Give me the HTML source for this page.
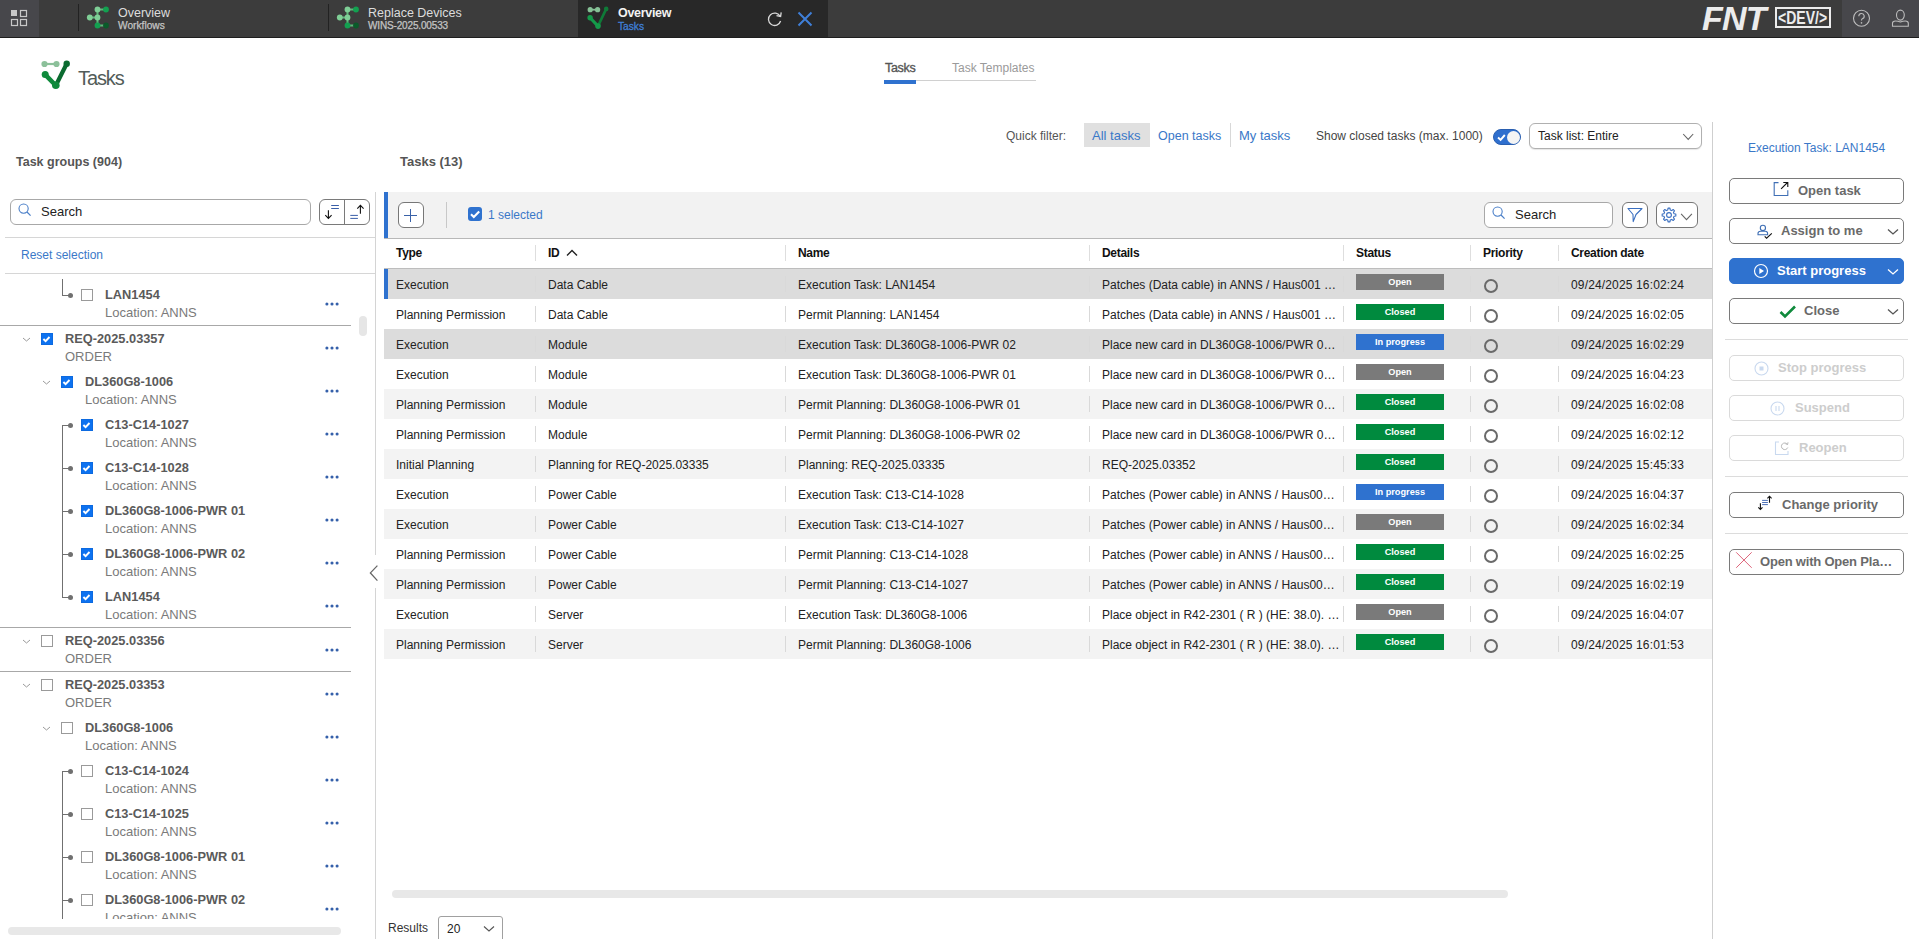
<!DOCTYPE html>
<html><head><meta charset="utf-8">
<style>
*{box-sizing:border-box;margin:0;padding:0}
html,body{width:1919px;height:939px;overflow:hidden;background:#fff;font-family:"Liberation Sans",sans-serif;color:#222}
.a{position:absolute}
.t{position:absolute;white-space:nowrap;line-height:1}
svg{position:absolute;overflow:visible}
.btn{position:absolute;left:1729px;width:175px;height:26px;border:1px solid #7a7a7a;border-radius:5px;background:#fff}
.btn .l{position:absolute;top:0;line-height:24px;font-size:13px;font-weight:bold;color:#6a6a6a;white-space:nowrap}
.btn.dis{border-color:#dadada}
.btn.dis .l{color:#cdcdcd}
.row{position:absolute;left:384px;width:1328px;height:30px;font-size:12px;line-height:30px;color:#222}
.row .c{position:absolute;top:0.8px;white-space:nowrap}
.row .sep{position:absolute;top:7px;width:1px;height:16px;background:#d9d9d9}
.badge{position:absolute;top:5px;left:972px;width:88px;height:16px;color:#fff;font-size:9.2px;font-weight:bold;line-height:16px;text-align:center}
.prio{position:absolute;left:1100px;top:10px;width:14px;height:14px;border:2px solid #6a6a6a;border-radius:50%}
.ti{position:absolute;left:0;width:351px;height:43px}
.ti .nm{position:absolute;top:6.5px;font-size:12.8px;font-weight:bold;color:#5a5a5a;white-space:nowrap;line-height:1}
.ti .sub{position:absolute;top:23.7px;font-size:13px;color:#7a7a7a;white-space:nowrap;line-height:1}
.cb{position:absolute;top:7px;width:12px;height:12px;border:1px solid #9a9a9a;background:#fff}
.cb.on{background:#0d72f0;border-color:#0d6ae0}
.dots{position:absolute;left:324px;top:20px;width:16px;height:4px}
</style></head><body>

<div class="a" style="left:0;top:0;width:1919px;height:37px;background:#3c3c3c"></div>
<div class="a" style="left:0;top:37px;width:1919px;height:1px;background:#1e1e1e"></div>
<div class="a" style="left:0;top:0;width:39px;height:37px;background:#47474b"></div>
<svg style="left:0;top:0" width="39" height="37">
<rect x="11" y="10" width="6" height="6" fill="#c8c8c8"/>
<rect x="20.5" y="10.5" width="6" height="6" fill="none" stroke="#c8c8c8" stroke-width="1.2"/>
<rect x="11.5" y="19.5" width="6" height="6" fill="none" stroke="#c8c8c8" stroke-width="1.2"/>
<rect x="20.5" y="19.5" width="6" height="6" fill="none" stroke="#c8c8c8" stroke-width="1.2"/>
</svg>
<div class="a" style="left:78px;top:4px;width:1px;height:27px;background:#222"></div>
<div class="a" style="left:328px;top:4px;width:1px;height:27px;background:#222"></div>
<svg style="left:87px;top:0" width="24" height="37">
<path d="M10.5 9.5 L10.5 25.5 M2.5 17.5 L10.5 17.5 M10.5 9.5 L19 9.5 M10.5 25.5 L19 25.5" stroke="#5fb57a" stroke-width="2" fill="none"/>
<circle cx="10.5" cy="9.5" r="2.9" fill="#7fcf96"/>
<circle cx="2.8" cy="17.5" r="2.9" fill="#7fcf96"/>
<circle cx="10.5" cy="17.5" r="2.9" fill="#7fcf96"/>
<circle cx="19" cy="9.5" r="2.9" fill="#12a050"/>
<circle cx="10.5" cy="25.5" r="2.9" fill="#12a050"/>
<circle cx="19" cy="25.5" r="2.9" fill="#0a5a2a"/>
</svg>
<div class="t" style="left:118px;top:7px;font-size:12.5px;color:#dcdcdc">Overview</div>
<div class="t" style="left:118px;top:21px;font-size:10.2px;color:#c4c4c4;-webkit-text-stroke:0.25px #c4c4c4">Workflows</div>
<svg style="left:337px;top:0" width="24" height="37">
<path d="M10.5 9.5 L10.5 25.5 M2.5 17.5 L10.5 17.5 M10.5 9.5 L19 9.5 M10.5 25.5 L19 25.5" stroke="#5fb57a" stroke-width="2" fill="none"/>
<circle cx="10.5" cy="9.5" r="2.9" fill="#7fcf96"/>
<circle cx="2.8" cy="17.5" r="2.9" fill="#7fcf96"/>
<circle cx="10.5" cy="17.5" r="2.9" fill="#7fcf96"/>
<circle cx="19" cy="9.5" r="2.9" fill="#12a050"/>
<circle cx="10.5" cy="25.5" r="2.9" fill="#12a050"/>
<circle cx="19" cy="25.5" r="2.9" fill="#0a5a2a"/>
</svg>
<div class="t" style="left:368px;top:7px;font-size:12.5px;color:#dcdcdc">Replace Devices</div>
<div class="t" style="left:368px;top:21px;font-size:10px;color:#c4c4c4;letter-spacing:-0.15px;-webkit-text-stroke:0.25px #c4c4c4">WINS-2025.00533</div>
<div class="a" style="left:578px;top:0;width:250px;height:37px;background:#282828"></div>
<svg style="left:584px;top:4px" width="26" height="28">
<path d="M6.2 5.7 L13.6 5.7" stroke="#86c196" stroke-width="1.8"/>
<circle cx="6.2" cy="5.7" r="2.6" fill="#86c196"/><circle cx="13.6" cy="5.7" r="2.6" fill="#86c196"/>
<path d="M6.1 13.7 L14 22.1" stroke="#159a4a" stroke-width="3.1" stroke-linecap="round"/>
<path d="M14 22.1 L22.2 4.9" stroke="#0f7a38" stroke-width="2.6" stroke-linecap="round"/>
<circle cx="6.1" cy="13.7" r="2.7" fill="#159a4a"/>
<circle cx="14" cy="22.1" r="2.8" fill="#159a4a"/>
<circle cx="22.2" cy="4.9" r="2.3" fill="#0f7a38"/>
</svg>
<div class="t" style="left:618px;top:7px;font-size:12.5px;font-weight:bold;color:#f2f2f2;letter-spacing:-0.3px">Overview</div>
<div class="t" style="left:618px;top:21.5px;font-size:10.2px;color:#3f7fd8;-webkit-text-stroke:0.3px #3f7fd8">Tasks</div>
<svg style="left:766px;top:10px" width="18" height="18">
<path d="M14.2 6.5 A6.2 6.2 0 1 0 14.6 11" stroke="#d8d8d8" stroke-width="1.3" fill="none"/>
<path d="M10.5 5.6 L14.6 6.4 L15.2 2.4" stroke="#d8d8d8" stroke-width="1.3" fill="none"/>
</svg>
<svg style="left:797px;top:11px" width="16" height="16">
<path d="M1.5 1.5 L14.5 14.5 M14.5 1.5 L1.5 14.5" stroke="#3f7fd8" stroke-width="2"/>
</svg>
<div class="t" style="left:1702px;top:1px;font-size:34px;font-weight:bold;font-style:italic;color:#ececec;letter-spacing:-0.8px;transform:scaleX(1.0);transform-origin:left">FNT</div>
<div class="a" style="left:1775px;top:7px;width:56px;height:21px;border:2.2px solid #ececec"></div>
<div class="t" style="left:1778px;top:9px;font-size:18px;font-weight:bold;color:#ececec;transform:scaleX(0.78);transform-origin:left;letter-spacing:0px">&lt;DEV/&gt;</div>
<div class="a" style="left:1842px;top:0;width:77px;height:37px;background:#47474b"></div>
<svg style="left:1852px;top:9px" width="20" height="20">
<circle cx="9.5" cy="9.3" r="8" stroke="#bdbdbd" stroke-width="1.1" fill="none"/>
<path d="M6.8 7.3 A2.7 2.7 0 1 1 10.3 9.8 Q9.5 10.3 9.5 11.6" stroke="#bdbdbd" stroke-width="1.1" fill="none"/>
<circle cx="9.5" cy="13.9" r="0.8" fill="#bdbdbd"/>
</svg>
<svg style="left:1891px;top:9px" width="20" height="20">
<ellipse cx="9.4" cy="6.1" rx="3.9" ry="5" stroke="#bdbdbd" stroke-width="1.1" fill="none"/>
<path d="M1.5 17.3 L1.5 14.2 Q1.5 12 4.5 12 Q7 12 9.4 13 Q11.8 12 14.3 12 Q17.3 12 17.3 14.2 L17.3 17.3 Z" stroke="#bdbdbd" stroke-width="1.1" fill="none"/>
</svg>
<svg style="left:40px;top:58px" width="32" height="32">
<path d="M4.5 6 L16.5 6" stroke="#8cc09a" stroke-width="2.2"/>
<circle cx="4.5" cy="6" r="3.1" fill="#8cc09a"/><circle cx="16.5" cy="6" r="3.1" fill="#8cc09a"/>
<path d="M5.2 16.6 L15.8 27.5" stroke="#0f8a3c" stroke-width="4.6" stroke-linecap="round"/>
<path d="M15.8 27.5 L26.7 5.8" stroke="#0b6b30" stroke-width="4.2" stroke-linecap="round"/>
<circle cx="5.2" cy="16.6" r="3.5" fill="#0f8a3c"/>
<circle cx="15.8" cy="27.3" r="3.8" fill="#0f8a3c"/>
<circle cx="26.7" cy="5.8" r="3.2" fill="#0b6b30"/>
</svg>
<div class="t" style="left:78px;top:68.4px;font-size:20px;color:#525c59;letter-spacing:-1.1px">Tasks</div>
<div class="t" style="left:885px;top:62px;font-size:12.5px;color:#555;letter-spacing:-0.3px;-webkit-text-stroke:0.35px #555">Tasks</div>
<div class="t" style="left:952px;top:62px;font-size:12px;color:#9a9a9a">Task Templates</div>
<div class="a" style="left:884px;top:80px;width:152px;height:1px;background:#d0d0d0"></div>
<div class="a" style="left:884px;top:80px;width:32px;height:3.5px;background:#2f72cf"></div>
<div class="t" style="left:16px;top:156px;font-size:12.5px;font-weight:bold;color:#555">Task groups (904)</div>
<div class="a" style="left:10px;top:199px;width:301px;height:26px;border:1px solid #a8a8a8;border-radius:6px;background:#fff"></div>
<svg style="left:18px;top:203px" width="14" height="14">
<circle cx="5.6" cy="5.6" r="4.6" stroke="#4a7fc8" stroke-width="1.1" fill="none"/>
<path d="M9 9 L12.6 12.6" stroke="#4a7fc8" stroke-width="1.2"/>
</svg>
<div class="t" style="left:41px;top:205px;font-size:13px;color:#222">Search</div>
<div class="a" style="left:319px;top:199px;width:51px;height:26px;border:1px solid #7a7a7a;border-radius:6px;background:#fff"></div>
<div class="a" style="left:344px;top:199px;width:1px;height:26px;background:#7a7a7a"></div>
<svg style="left:324px;top:203px" width="18" height="18">
<path d="M4.4 7.3 L4.4 15.3 M1.3 12.2 L4.4 15.4 L7.6 12.2" stroke="#111" stroke-width="1.1" fill="none"/>
<path d="M7.2 2.5 L14.9 2.5 M7.2 5.5 L14.9 5.5" stroke="#3a5fa8" stroke-width="1"/>
</svg>
<svg style="left:348px;top:203px" width="18" height="18">
<path d="M12.4 10.8 L12.4 2.5 M9.3 5.6 L12.4 2.4 L15.6 5.6" stroke="#111" stroke-width="1.1" fill="none"/>
<path d="M2.3 12.4 L9.9 12.4 M2.3 15.4 L9.9 15.4" stroke="#3a5fa8" stroke-width="1"/>
</svg>
<div class="a" style="left:5px;top:237px;width:370px;height:1px;background:#d6d6d6"></div>
<div class="t" style="left:21px;top:249px;font-size:12px;color:#3a78c8">Reset selection</div>
<div class="a" style="left:5px;top:273px;width:370px;height:1px;background:#d6d6d6"></div>
<div class="a" style="left:0;top:274px;width:375px;height:645px;overflow:hidden">
<div class="ti" style="top:8px">
<div class="a" style="left:62px;top:-3px;width:1px;height:17px;background:#707070"></div>
<div class="a" style="left:62px;top:13px;width:7px;height:1px;background:#707070"></div>
<div class="a" style="left:67.5px;top:11px;width:5px;height:5px;border-radius:50%;background:#707070"></div>
<div class="cb" style="left:81px"></div>
<div class="nm" style="left:105px">LAN1454</div>
<div class="sub" style="left:105px">Location: ANNS</div>
<svg class="dots" style="left:324px;top:20px" width="16" height="4"><circle cx="2.9" cy="2" r="1.55" fill="#3560aa"/><circle cx="8" cy="2" r="1.55" fill="#3560aa"/><circle cx="13.1" cy="2" r="1.55" fill="#3560aa"/></svg>
</div>
<div class="a" style="left:0;top:51px;width:351px;height:1px;background:#a8a8a8"></div>
<div class="ti" style="top:52px">
<svg style="left:22px;top:11px" width="10" height="6"><path d="M1 1 L4.5 4 L8 1" stroke="#9a9a9a" stroke-width="1" fill="none"/></svg>
<div class="cb on" style="left:41px"><svg style="left:1px;top:1.5px" width="10" height="8"><path d="M0.4 3 L2.6 5.2 L6.5 1.0" stroke="#fff" stroke-width="1.9" fill="none"/></svg></div>
<div class="nm" style="left:65px">REQ-2025.03357</div>
<div class="sub" style="left:65px">ORDER</div>
<svg class="dots" style="left:324px;top:20px" width="16" height="4"><circle cx="2.9" cy="2" r="1.55" fill="#3560aa"/><circle cx="8" cy="2" r="1.55" fill="#3560aa"/><circle cx="13.1" cy="2" r="1.55" fill="#3560aa"/></svg>
</div>
<div class="ti" style="top:95px">
<svg style="left:42px;top:11px" width="10" height="6"><path d="M1 1 L4.5 4 L8 1" stroke="#9a9a9a" stroke-width="1" fill="none"/></svg>
<div class="cb on" style="left:61px"><svg style="left:1px;top:1.5px" width="10" height="8"><path d="M0.4 3 L2.6 5.2 L6.5 1.0" stroke="#fff" stroke-width="1.9" fill="none"/></svg></div>
<div class="nm" style="left:85px">DL360G8-1006</div>
<div class="sub" style="left:85px">Location: ANNS</div>
<svg class="dots" style="left:324px;top:20px" width="16" height="4"><circle cx="2.9" cy="2" r="1.55" fill="#3560aa"/><circle cx="8" cy="2" r="1.55" fill="#3560aa"/><circle cx="13.1" cy="2" r="1.55" fill="#3560aa"/></svg>
</div>
<div class="ti" style="top:138px">
<div class="a" style="left:62px;top:13px;width:1px;height:30px;background:#707070"></div>
<div class="a" style="left:62px;top:13px;width:7px;height:1px;background:#707070"></div>
<div class="a" style="left:67.5px;top:11px;width:5px;height:5px;border-radius:50%;background:#707070"></div>
<div class="cb on" style="left:81px"><svg style="left:1px;top:1.5px" width="10" height="8"><path d="M0.4 3 L2.6 5.2 L6.5 1.0" stroke="#fff" stroke-width="1.9" fill="none"/></svg></div>
<div class="nm" style="left:105px">C13-C14-1027</div>
<div class="sub" style="left:105px">Location: ANNS</div>
<svg class="dots" style="left:324px;top:20px" width="16" height="4"><circle cx="2.9" cy="2" r="1.55" fill="#3560aa"/><circle cx="8" cy="2" r="1.55" fill="#3560aa"/><circle cx="13.1" cy="2" r="1.55" fill="#3560aa"/></svg>
</div>
<div class="ti" style="top:181px">
<div class="a" style="left:62px;top:0;width:1px;height:43px;background:#707070"></div>
<div class="a" style="left:62px;top:13px;width:7px;height:1px;background:#707070"></div>
<div class="a" style="left:67.5px;top:11px;width:5px;height:5px;border-radius:50%;background:#707070"></div>
<div class="cb on" style="left:81px"><svg style="left:1px;top:1.5px" width="10" height="8"><path d="M0.4 3 L2.6 5.2 L6.5 1.0" stroke="#fff" stroke-width="1.9" fill="none"/></svg></div>
<div class="nm" style="left:105px">C13-C14-1028</div>
<div class="sub" style="left:105px">Location: ANNS</div>
<svg class="dots" style="left:324px;top:20px" width="16" height="4"><circle cx="2.9" cy="2" r="1.55" fill="#3560aa"/><circle cx="8" cy="2" r="1.55" fill="#3560aa"/><circle cx="13.1" cy="2" r="1.55" fill="#3560aa"/></svg>
</div>
<div class="ti" style="top:224px">
<div class="a" style="left:62px;top:0;width:1px;height:43px;background:#707070"></div>
<div class="a" style="left:62px;top:13px;width:7px;height:1px;background:#707070"></div>
<div class="a" style="left:67.5px;top:11px;width:5px;height:5px;border-radius:50%;background:#707070"></div>
<div class="cb on" style="left:81px"><svg style="left:1px;top:1.5px" width="10" height="8"><path d="M0.4 3 L2.6 5.2 L6.5 1.0" stroke="#fff" stroke-width="1.9" fill="none"/></svg></div>
<div class="nm" style="left:105px">DL360G8-1006-PWR 01</div>
<div class="sub" style="left:105px">Location: ANNS</div>
<svg class="dots" style="left:324px;top:20px" width="16" height="4"><circle cx="2.9" cy="2" r="1.55" fill="#3560aa"/><circle cx="8" cy="2" r="1.55" fill="#3560aa"/><circle cx="13.1" cy="2" r="1.55" fill="#3560aa"/></svg>
</div>
<div class="ti" style="top:267px">
<div class="a" style="left:62px;top:0;width:1px;height:43px;background:#707070"></div>
<div class="a" style="left:62px;top:13px;width:7px;height:1px;background:#707070"></div>
<div class="a" style="left:67.5px;top:11px;width:5px;height:5px;border-radius:50%;background:#707070"></div>
<div class="cb on" style="left:81px"><svg style="left:1px;top:1.5px" width="10" height="8"><path d="M0.4 3 L2.6 5.2 L6.5 1.0" stroke="#fff" stroke-width="1.9" fill="none"/></svg></div>
<div class="nm" style="left:105px">DL360G8-1006-PWR 02</div>
<div class="sub" style="left:105px">Location: ANNS</div>
<svg class="dots" style="left:324px;top:20px" width="16" height="4"><circle cx="2.9" cy="2" r="1.55" fill="#3560aa"/><circle cx="8" cy="2" r="1.55" fill="#3560aa"/><circle cx="13.1" cy="2" r="1.55" fill="#3560aa"/></svg>
</div>
<div class="ti" style="top:310px">
<div class="a" style="left:62px;top:-3px;width:1px;height:17px;background:#707070"></div>
<div class="a" style="left:62px;top:13px;width:7px;height:1px;background:#707070"></div>
<div class="a" style="left:67.5px;top:11px;width:5px;height:5px;border-radius:50%;background:#707070"></div>
<div class="cb on" style="left:81px"><svg style="left:1px;top:1.5px" width="10" height="8"><path d="M0.4 3 L2.6 5.2 L6.5 1.0" stroke="#fff" stroke-width="1.9" fill="none"/></svg></div>
<div class="nm" style="left:105px">LAN1454</div>
<div class="sub" style="left:105px">Location: ANNS</div>
<svg class="dots" style="left:324px;top:20px" width="16" height="4"><circle cx="2.9" cy="2" r="1.55" fill="#3560aa"/><circle cx="8" cy="2" r="1.55" fill="#3560aa"/><circle cx="13.1" cy="2" r="1.55" fill="#3560aa"/></svg>
</div>
<div class="a" style="left:0;top:353px;width:351px;height:1px;background:#a8a8a8"></div>
<div class="ti" style="top:354px">
<svg style="left:22px;top:11px" width="10" height="6"><path d="M1 1 L4.5 4 L8 1" stroke="#9a9a9a" stroke-width="1" fill="none"/></svg>
<div class="cb" style="left:41px"></div>
<div class="nm" style="left:65px">REQ-2025.03356</div>
<div class="sub" style="left:65px">ORDER</div>
<svg class="dots" style="left:324px;top:20px" width="16" height="4"><circle cx="2.9" cy="2" r="1.55" fill="#3560aa"/><circle cx="8" cy="2" r="1.55" fill="#3560aa"/><circle cx="13.1" cy="2" r="1.55" fill="#3560aa"/></svg>
</div>
<div class="a" style="left:0;top:397px;width:351px;height:1px;background:#a8a8a8"></div>
<div class="ti" style="top:398px">
<svg style="left:22px;top:11px" width="10" height="6"><path d="M1 1 L4.5 4 L8 1" stroke="#9a9a9a" stroke-width="1" fill="none"/></svg>
<div class="cb" style="left:41px"></div>
<div class="nm" style="left:65px">REQ-2025.03353</div>
<div class="sub" style="left:65px">ORDER</div>
<svg class="dots" style="left:324px;top:20px" width="16" height="4"><circle cx="2.9" cy="2" r="1.55" fill="#3560aa"/><circle cx="8" cy="2" r="1.55" fill="#3560aa"/><circle cx="13.1" cy="2" r="1.55" fill="#3560aa"/></svg>
</div>
<div class="ti" style="top:441px">
<svg style="left:42px;top:11px" width="10" height="6"><path d="M1 1 L4.5 4 L8 1" stroke="#9a9a9a" stroke-width="1" fill="none"/></svg>
<div class="cb" style="left:61px"></div>
<div class="nm" style="left:85px">DL360G8-1006</div>
<div class="sub" style="left:85px">Location: ANNS</div>
<svg class="dots" style="left:324px;top:20px" width="16" height="4"><circle cx="2.9" cy="2" r="1.55" fill="#3560aa"/><circle cx="8" cy="2" r="1.55" fill="#3560aa"/><circle cx="13.1" cy="2" r="1.55" fill="#3560aa"/></svg>
</div>
<div class="ti" style="top:484px">
<div class="a" style="left:62px;top:13px;width:1px;height:30px;background:#707070"></div>
<div class="a" style="left:62px;top:13px;width:7px;height:1px;background:#707070"></div>
<div class="a" style="left:67.5px;top:11px;width:5px;height:5px;border-radius:50%;background:#707070"></div>
<div class="cb" style="left:81px"></div>
<div class="nm" style="left:105px">C13-C14-1024</div>
<div class="sub" style="left:105px">Location: ANNS</div>
<svg class="dots" style="left:324px;top:20px" width="16" height="4"><circle cx="2.9" cy="2" r="1.55" fill="#3560aa"/><circle cx="8" cy="2" r="1.55" fill="#3560aa"/><circle cx="13.1" cy="2" r="1.55" fill="#3560aa"/></svg>
</div>
<div class="ti" style="top:527px">
<div class="a" style="left:62px;top:0;width:1px;height:43px;background:#707070"></div>
<div class="a" style="left:62px;top:13px;width:7px;height:1px;background:#707070"></div>
<div class="a" style="left:67.5px;top:11px;width:5px;height:5px;border-radius:50%;background:#707070"></div>
<div class="cb" style="left:81px"></div>
<div class="nm" style="left:105px">C13-C14-1025</div>
<div class="sub" style="left:105px">Location: ANNS</div>
<svg class="dots" style="left:324px;top:20px" width="16" height="4"><circle cx="2.9" cy="2" r="1.55" fill="#3560aa"/><circle cx="8" cy="2" r="1.55" fill="#3560aa"/><circle cx="13.1" cy="2" r="1.55" fill="#3560aa"/></svg>
</div>
<div class="ti" style="top:570px">
<div class="a" style="left:62px;top:0;width:1px;height:43px;background:#707070"></div>
<div class="a" style="left:62px;top:13px;width:7px;height:1px;background:#707070"></div>
<div class="a" style="left:67.5px;top:11px;width:5px;height:5px;border-radius:50%;background:#707070"></div>
<div class="cb" style="left:81px"></div>
<div class="nm" style="left:105px">DL360G8-1006-PWR 01</div>
<div class="sub" style="left:105px">Location: ANNS</div>
<svg class="dots" style="left:324px;top:20px" width="16" height="4"><circle cx="2.9" cy="2" r="1.55" fill="#3560aa"/><circle cx="8" cy="2" r="1.55" fill="#3560aa"/><circle cx="13.1" cy="2" r="1.55" fill="#3560aa"/></svg>
</div>
<div class="ti" style="top:613px">
<div class="a" style="left:62px;top:0;width:1px;height:43px;background:#707070"></div>
<div class="a" style="left:62px;top:13px;width:7px;height:1px;background:#707070"></div>
<div class="a" style="left:67.5px;top:11px;width:5px;height:5px;border-radius:50%;background:#707070"></div>
<div class="cb" style="left:81px"></div>
<div class="nm" style="left:105px">DL360G8-1006-PWR 02</div>
<div class="sub" style="left:105px">Location: ANNS</div>
<svg class="dots" style="left:324px;top:20px" width="16" height="4"><circle cx="2.9" cy="2" r="1.55" fill="#3560aa"/><circle cx="8" cy="2" r="1.55" fill="#3560aa"/><circle cx="13.1" cy="2" r="1.55" fill="#3560aa"/></svg>
</div>
</div>
<div class="a" style="left:359px;top:316px;width:8px;height:20px;border-radius:4px;background:#e6e6e6"></div>
<div class="a" style="left:8px;top:927px;width:333px;height:8px;border-radius:4px;background:#e8e8e8"></div>
<div class="a" style="left:375px;top:192px;width:1px;height:363px;background:#d4d4d4"></div>
<div class="a" style="left:375px;top:588px;width:1px;height:351px;background:#d4d4d4"></div>
<svg style="left:368px;top:564px" width="12" height="18"><path d="M9.4 1.6 L2.4 8.9 L9.4 16.6" stroke="#666" stroke-width="1.3" fill="none"/></svg>
<div class="t" style="left:400px;top:155px;font-size:13px;font-weight:bold;color:#555">Tasks (13)</div>
<div class="t" style="left:1006px;top:130px;font-size:12px;color:#555">Quick filter:</div>
<div class="a" style="left:1084px;top:123px;width:66px;height:24px;background:#e0e0e0"></div>
<div class="t" style="left:1092px;top:129px;font-size:13px;color:#3a78c8">All tasks</div>
<div class="t" style="left:1158px;top:130px;font-size:12.5px;color:#3a78c8">Open tasks</div>
<div class="a" style="left:1230px;top:123px;width:1px;height:24px;background:#d8d8d8"></div>
<div class="t" style="left:1239px;top:129px;font-size:13px;color:#3a78c8">My tasks</div>
<div class="t" style="left:1316px;top:130px;font-size:12px;color:#444">Show closed tasks (max. 1000)</div>
<div class="a" style="left:1493px;top:129px;width:28px;height:16px;border-radius:8px;background:#2f6fce;border:1px solid #2a5fb0"></div>
<div class="a" style="left:1507px;top:130.5px;width:13px;height:13px;border-radius:50%;background:#f4f4f4"></div>
<svg style="left:1497px;top:133px" width="10" height="9"><path d="M1 4.5 L3.6 6.8 L7.8 2" stroke="#fff" stroke-width="1.9" fill="none"/></svg>
<div class="a" style="left:1529px;top:123px;width:173px;height:26px;border:1px solid #b0b0b0;border-radius:6px;background:#fff;box-shadow:0 1px 1px rgba(0,0,0,0.10)"></div>
<div class="t" style="left:1538px;top:130px;font-size:12px;color:#222">Task list: Entire</div>
<svg style="left:1682px;top:133px" width="13" height="8"><path d="M1.2 1 L6.2 6.4 L11.2 1" stroke="#666" stroke-width="1.1" fill="none"/></svg>
<div class="a" style="left:384px;top:192px;width:1328px;height:46px;background:#f2f2f2"></div>
<div class="a" style="left:384px;top:192px;width:4px;height:46px;background:#2f72cf"></div>
<div class="a" style="left:384px;top:238px;width:1328px;height:1px;background:#b8b8b8"></div>
<div class="a" style="left:398px;top:202px;width:26px;height:26px;border:1px solid #777;border-radius:6px;background:#fff"></div>
<svg style="left:403px;top:207px" width="16" height="16"><path d="M7.5 2 L7.5 15 M1 8.5 L14 8.5" stroke="#3a62a8" stroke-width="1"/></svg>
<div class="a" style="left:446px;top:202px;width:1px;height:26px;background:#c8c8c8"></div>
<div class="a" style="left:468px;top:207px;width:14px;height:14px;border-radius:3px;background:#2f72cf"></div>
<svg style="left:470px;top:210px" width="11" height="9"><path d="M1 4.3 L3.8 7 L9.2 1.4" stroke="#fff" stroke-width="2.1" fill="none"/></svg>
<div class="t" style="left:488px;top:209px;font-size:12px;color:#3a78c8">1 selected</div>
<div class="a" style="left:1484px;top:202px;width:129px;height:26px;border:1px solid #a8a8a8;border-radius:6px;background:#fff"></div>
<svg style="left:1492px;top:206px" width="14" height="14">
<circle cx="5.6" cy="5.6" r="4.6" stroke="#4a7fc8" stroke-width="1.1" fill="none"/>
<path d="M9 9 L12.6 12.6" stroke="#4a7fc8" stroke-width="1.2"/>
</svg>
<div class="t" style="left:1515px;top:208px;font-size:13px;color:#222">Search</div>
<div class="a" style="left:1622px;top:202px;width:26px;height:26px;border:1px solid #777;border-radius:6px;background:#fff"></div>
<svg style="left:1627px;top:207px" width="16" height="16"><path d="M1 1.5 L15 1.5 L9 7.5 L6.2 14.6 L6 7.5 Z" stroke="#3a6fc0" stroke-width="1.1" fill="none" stroke-linejoin="round"/></svg>
<div class="a" style="left:1656px;top:202px;width:42px;height:26px;border:1px solid #777;border-radius:6px;background:#fff"></div>
<svg style="left:1660px;top:207px" width="18" height="16">
<circle cx="9" cy="8" r="2.4" stroke="#3a6fc0" stroke-width="1.1" fill="none"/>
<path d="M14.06 6.79 L15.83 7.03 L15.83 8.97 L14.06 9.21 L13.43 10.72 L14.52 12.14 L13.14 13.52 L11.72 12.43 L10.21 13.06 L9.97 14.83 L8.03 14.83 L7.79 13.06 L6.28 12.43 L4.86 13.52 L3.48 12.14 L4.57 10.72 L3.94 9.21 L2.17 8.97 L2.17 7.03 L3.94 6.79 L4.57 5.28 L3.48 3.86 L4.86 2.48 L6.28 3.57 L7.79 2.94 L8.03 1.17 L9.97 1.17 L10.21 2.94 L11.72 3.57 L13.14 2.48 L14.52 3.86 L13.43 5.28 Z" stroke="#3a6fc0" stroke-width="1.1" fill="none" stroke-linejoin="round"/>
</svg>
<svg style="left:1680px;top:212px" width="13" height="9"><path d="M1.1 1.9 L6.5 7.6 L11.9 1.9" stroke="#666" stroke-width="1.1" fill="none"/></svg>
<div class="t" style="left:396px;top:247px;font-size:12px;font-weight:bold;color:#111;letter-spacing:-0.3px">Type</div>
<div class="t" style="left:548px;top:247px;font-size:12px;font-weight:bold;color:#111;letter-spacing:-0.3px">ID</div>
<div class="t" style="left:798px;top:247px;font-size:12px;font-weight:bold;color:#111;letter-spacing:-0.3px">Name</div>
<div class="t" style="left:1102px;top:247px;font-size:12px;font-weight:bold;color:#111;letter-spacing:-0.3px">Details</div>
<div class="t" style="left:1356px;top:247px;font-size:12px;font-weight:bold;color:#111;letter-spacing:-0.3px">Status</div>
<div class="t" style="left:1483px;top:247px;font-size:12px;font-weight:bold;color:#111;letter-spacing:-0.3px">Priority</div>
<div class="t" style="left:1571px;top:247px;font-size:12px;font-weight:bold;color:#111;letter-spacing:-0.3px">Creation date</div>
<div class="a" style="left:535px;top:245px;width:1px;height:16px;background:#dedede"></div>
<div class="a" style="left:785px;top:245px;width:1px;height:16px;background:#dedede"></div>
<div class="a" style="left:1089px;top:245px;width:1px;height:16px;background:#dedede"></div>
<div class="a" style="left:1343px;top:245px;width:1px;height:16px;background:#dedede"></div>
<div class="a" style="left:1470px;top:245px;width:1px;height:16px;background:#dedede"></div>
<div class="a" style="left:1558px;top:245px;width:1px;height:16px;background:#dedede"></div>
<svg style="left:566px;top:249px" width="12" height="8"><path d="M1 6.5 L6 1.5 L11 6.5" stroke="#222" stroke-width="1.4" fill="none"/></svg>
<div class="a" style="left:384px;top:268px;width:1328px;height:1px;background:#bdbdbd"></div>
<div class="row" style="top:269px;background:#dcdcdc">
<div class="a" style="left:0;top:0;width:4px;height:30px;background:#2f72cf"></div>
<div class="c" style="left:12px">Execution</div>
<div class="c" style="left:164px">Data Cable</div>
<div class="c" style="left:414px">Execution Task: LAN1454</div>
<div class="c" style="left:718px">Patches (Data cable) in ANNS / Haus001 …</div>
<div class="sep" style="left:151px"></div>
<div class="sep" style="left:401px"></div>
<div class="sep" style="left:705px"></div>
<div class="sep" style="left:959px"></div>
<div class="sep" style="left:1086px"></div>
<div class="sep" style="left:1174px"></div>
<div class="badge" style="background:#7a7a7a">Open</div>
<div class="prio" style="left:1100px"></div>
<div class="c" style="left:1187px;letter-spacing:0.15px">09/24/2025 16:02:24</div>
</div>
<div class="row" style="top:299px;background:#ffffff">
<div class="c" style="left:12px">Planning Permission</div>
<div class="c" style="left:164px">Data Cable</div>
<div class="c" style="left:414px">Permit Planning: LAN1454</div>
<div class="c" style="left:718px">Patches (Data cable) in ANNS / Haus001 …</div>
<div class="sep" style="left:151px"></div>
<div class="sep" style="left:401px"></div>
<div class="sep" style="left:705px"></div>
<div class="sep" style="left:959px"></div>
<div class="sep" style="left:1086px"></div>
<div class="sep" style="left:1174px"></div>
<div class="badge" style="background:#008a3e">Closed</div>
<div class="prio" style="left:1100px"></div>
<div class="c" style="left:1187px;letter-spacing:0.15px">09/24/2025 16:02:05</div>
</div>
<div class="row" style="top:329px;background:#dcdcdc">
<div class="c" style="left:12px">Execution</div>
<div class="c" style="left:164px">Module</div>
<div class="c" style="left:414px">Execution Task: DL360G8-1006-PWR 02</div>
<div class="c" style="left:718px">Place new card in DL360G8-1006/PWR 0…</div>
<div class="sep" style="left:151px"></div>
<div class="sep" style="left:401px"></div>
<div class="sep" style="left:705px"></div>
<div class="sep" style="left:959px"></div>
<div class="sep" style="left:1086px"></div>
<div class="sep" style="left:1174px"></div>
<div class="badge" style="background:#2f72cf">In progress</div>
<div class="prio" style="left:1100px"></div>
<div class="c" style="left:1187px;letter-spacing:0.15px">09/24/2025 16:02:29</div>
</div>
<div class="row" style="top:359px;background:#ffffff">
<div class="c" style="left:12px">Execution</div>
<div class="c" style="left:164px">Module</div>
<div class="c" style="left:414px">Execution Task: DL360G8-1006-PWR 01</div>
<div class="c" style="left:718px">Place new card in DL360G8-1006/PWR 0…</div>
<div class="sep" style="left:151px"></div>
<div class="sep" style="left:401px"></div>
<div class="sep" style="left:705px"></div>
<div class="sep" style="left:959px"></div>
<div class="sep" style="left:1086px"></div>
<div class="sep" style="left:1174px"></div>
<div class="badge" style="background:#7a7a7a">Open</div>
<div class="prio" style="left:1100px"></div>
<div class="c" style="left:1187px;letter-spacing:0.15px">09/24/2025 16:04:23</div>
</div>
<div class="row" style="top:389px;background:#f3f3f3">
<div class="c" style="left:12px">Planning Permission</div>
<div class="c" style="left:164px">Module</div>
<div class="c" style="left:414px">Permit Planning: DL360G8-1006-PWR 01</div>
<div class="c" style="left:718px">Place new card in DL360G8-1006/PWR 0…</div>
<div class="sep" style="left:151px"></div>
<div class="sep" style="left:401px"></div>
<div class="sep" style="left:705px"></div>
<div class="sep" style="left:959px"></div>
<div class="sep" style="left:1086px"></div>
<div class="sep" style="left:1174px"></div>
<div class="badge" style="background:#008a3e">Closed</div>
<div class="prio" style="left:1100px"></div>
<div class="c" style="left:1187px;letter-spacing:0.15px">09/24/2025 16:02:08</div>
</div>
<div class="row" style="top:419px;background:#ffffff">
<div class="c" style="left:12px">Planning Permission</div>
<div class="c" style="left:164px">Module</div>
<div class="c" style="left:414px">Permit Planning: DL360G8-1006-PWR 02</div>
<div class="c" style="left:718px">Place new card in DL360G8-1006/PWR 0…</div>
<div class="sep" style="left:151px"></div>
<div class="sep" style="left:401px"></div>
<div class="sep" style="left:705px"></div>
<div class="sep" style="left:959px"></div>
<div class="sep" style="left:1086px"></div>
<div class="sep" style="left:1174px"></div>
<div class="badge" style="background:#008a3e">Closed</div>
<div class="prio" style="left:1100px"></div>
<div class="c" style="left:1187px;letter-spacing:0.15px">09/24/2025 16:02:12</div>
</div>
<div class="row" style="top:449px;background:#f3f3f3">
<div class="c" style="left:12px">Initial Planning</div>
<div class="c" style="left:164px">Planning for REQ-2025.03335</div>
<div class="c" style="left:414px">Planning: REQ-2025.03335</div>
<div class="c" style="left:718px">REQ-2025.03352</div>
<div class="sep" style="left:151px"></div>
<div class="sep" style="left:401px"></div>
<div class="sep" style="left:705px"></div>
<div class="sep" style="left:959px"></div>
<div class="sep" style="left:1086px"></div>
<div class="sep" style="left:1174px"></div>
<div class="badge" style="background:#008a3e">Closed</div>
<div class="prio" style="left:1100px"></div>
<div class="c" style="left:1187px;letter-spacing:0.15px">09/24/2025 15:45:33</div>
</div>
<div class="row" style="top:479px;background:#ffffff">
<div class="c" style="left:12px">Execution</div>
<div class="c" style="left:164px">Power Cable</div>
<div class="c" style="left:414px">Execution Task: C13-C14-1028</div>
<div class="c" style="left:718px">Patches (Power cable) in ANNS / Haus00…</div>
<div class="sep" style="left:151px"></div>
<div class="sep" style="left:401px"></div>
<div class="sep" style="left:705px"></div>
<div class="sep" style="left:959px"></div>
<div class="sep" style="left:1086px"></div>
<div class="sep" style="left:1174px"></div>
<div class="badge" style="background:#2f72cf">In progress</div>
<div class="prio" style="left:1100px"></div>
<div class="c" style="left:1187px;letter-spacing:0.15px">09/24/2025 16:04:37</div>
</div>
<div class="row" style="top:509px;background:#f3f3f3">
<div class="c" style="left:12px">Execution</div>
<div class="c" style="left:164px">Power Cable</div>
<div class="c" style="left:414px">Execution Task: C13-C14-1027</div>
<div class="c" style="left:718px">Patches (Power cable) in ANNS / Haus00…</div>
<div class="sep" style="left:151px"></div>
<div class="sep" style="left:401px"></div>
<div class="sep" style="left:705px"></div>
<div class="sep" style="left:959px"></div>
<div class="sep" style="left:1086px"></div>
<div class="sep" style="left:1174px"></div>
<div class="badge" style="background:#7a7a7a">Open</div>
<div class="prio" style="left:1100px"></div>
<div class="c" style="left:1187px;letter-spacing:0.15px">09/24/2025 16:02:34</div>
</div>
<div class="row" style="top:539px;background:#ffffff">
<div class="c" style="left:12px">Planning Permission</div>
<div class="c" style="left:164px">Power Cable</div>
<div class="c" style="left:414px">Permit Planning: C13-C14-1028</div>
<div class="c" style="left:718px">Patches (Power cable) in ANNS / Haus00…</div>
<div class="sep" style="left:151px"></div>
<div class="sep" style="left:401px"></div>
<div class="sep" style="left:705px"></div>
<div class="sep" style="left:959px"></div>
<div class="sep" style="left:1086px"></div>
<div class="sep" style="left:1174px"></div>
<div class="badge" style="background:#008a3e">Closed</div>
<div class="prio" style="left:1100px"></div>
<div class="c" style="left:1187px;letter-spacing:0.15px">09/24/2025 16:02:25</div>
</div>
<div class="row" style="top:569px;background:#f3f3f3">
<div class="c" style="left:12px">Planning Permission</div>
<div class="c" style="left:164px">Power Cable</div>
<div class="c" style="left:414px">Permit Planning: C13-C14-1027</div>
<div class="c" style="left:718px">Patches (Power cable) in ANNS / Haus00…</div>
<div class="sep" style="left:151px"></div>
<div class="sep" style="left:401px"></div>
<div class="sep" style="left:705px"></div>
<div class="sep" style="left:959px"></div>
<div class="sep" style="left:1086px"></div>
<div class="sep" style="left:1174px"></div>
<div class="badge" style="background:#008a3e">Closed</div>
<div class="prio" style="left:1100px"></div>
<div class="c" style="left:1187px;letter-spacing:0.15px">09/24/2025 16:02:19</div>
</div>
<div class="row" style="top:599px;background:#ffffff">
<div class="c" style="left:12px">Execution</div>
<div class="c" style="left:164px">Server</div>
<div class="c" style="left:414px">Execution Task: DL360G8-1006</div>
<div class="c" style="left:718px">Place object in R42-2301 ( R ) (HE: 38.0). …</div>
<div class="sep" style="left:151px"></div>
<div class="sep" style="left:401px"></div>
<div class="sep" style="left:705px"></div>
<div class="sep" style="left:959px"></div>
<div class="sep" style="left:1086px"></div>
<div class="sep" style="left:1174px"></div>
<div class="badge" style="background:#7a7a7a">Open</div>
<div class="prio" style="left:1100px"></div>
<div class="c" style="left:1187px;letter-spacing:0.15px">09/24/2025 16:04:07</div>
</div>
<div class="row" style="top:629px;background:#f3f3f3">
<div class="c" style="left:12px">Planning Permission</div>
<div class="c" style="left:164px">Server</div>
<div class="c" style="left:414px">Permit Planning: DL360G8-1006</div>
<div class="c" style="left:718px">Place object in R42-2301 ( R ) (HE: 38.0). …</div>
<div class="sep" style="left:151px"></div>
<div class="sep" style="left:401px"></div>
<div class="sep" style="left:705px"></div>
<div class="sep" style="left:959px"></div>
<div class="sep" style="left:1086px"></div>
<div class="sep" style="left:1174px"></div>
<div class="badge" style="background:#008a3e">Closed</div>
<div class="prio" style="left:1100px"></div>
<div class="c" style="left:1187px;letter-spacing:0.15px">09/24/2025 16:01:53</div>
</div>
<div class="a" style="left:392px;top:890px;width:1116px;height:8px;border-radius:4px;background:#e8e8e8"></div>
<div class="t" style="left:388px;top:922px;font-size:12px;color:#333">Results</div>
<div class="a" style="left:438px;top:916px;width:65px;height:26px;border:1px solid #a0a0a0;border-radius:3px;background:#fff"></div>
<div class="t" style="left:447px;top:923px;font-size:12px;color:#222">20</div>
<svg style="left:483px;top:925px" width="12" height="8"><path d="M1 1.5 L6 6 L11 1.5" stroke="#555" stroke-width="1.1" fill="none"/></svg>
<div class="a" style="left:1712px;top:122px;width:1px;height:817px;background:#cfcfcf"></div>
<div class="t" style="left:1748px;top:142px;font-size:12px;color:#3a78c8">Execution Task: LAN1454</div>
<div class="btn" style="top:178px"><svg style="left:43px;top:3px" width="16" height="16"><path d="M5.5 0.6 L1.2 0.6 L1.2 13.5 L14.8 13.5 L14.8 8.3" stroke="#3f6fb5" stroke-width="1.1" fill="none"/><path d="M8.1 6.8 L14.5 0.5 M10.3 0.5 L14.8 0.5 L14.8 5" stroke="#111" stroke-width="1.1" fill="none"/></svg><div class="l" style="left:68px">Open task</div></div>
<div class="btn" style="top:218px"><svg style="left:27px;top:5px" width="16" height="16"><circle cx="5.9" cy="3.9" r="2.6" stroke="#3f6fb5" stroke-width="1.1" fill="none"/><path d="M1 10.8 L1 9.5 Q1 7.2 3.5 7.2 L8.3 7.2 Q10.6 7.2 10.6 9.5 L10.6 10.8 Z" stroke="#3f6fb5" stroke-width="1.1" fill="none"/><path d="M7.7 12.3 L9.6 14.2 L14.8 9.3" stroke="#111" stroke-width="1.1" fill="none"/></svg><div class="l" style="left:51px">Assign to me</div><svg style="left:157px;top:9px" width="12" height="8"><path d="M1 1.5 L6 6 L11 1.5" stroke="#555" stroke-width="1.3" fill="none"/></svg></div>
<div class="btn" style="top:258px;background:#2f72cf;border-color:#2f72cf"><svg style="left:23px;top:4px" width="16" height="16"><circle cx="8" cy="8" r="6.5" stroke="#fff" stroke-width="1.2" fill="none"/><path d="M6.3 5 L11 8 L6.3 11 Z" fill="#fff"/></svg><div class="l" style="left:47px;color:#fff">Start progress</div><svg style="left:157px;top:9px" width="12" height="8"><path d="M1 1.5 L6 6 L11 1.5" stroke="#fff" stroke-width="1.3" fill="none"/></svg></div>
<div class="btn" style="top:298px"><svg style="left:49px;top:6px" width="18" height="14"><path d="M1.5 7 L6 11.5 L16 1.5" stroke="#0f8a3c" stroke-width="2.6" fill="none"/></svg><div class="l" style="left:74px">Close</div><svg style="left:157px;top:9px" width="12" height="8"><path d="M1 1.5 L6 6 L11 1.5" stroke="#555" stroke-width="1.3" fill="none"/></svg></div>
<div class="a" style="left:1725px;top:339px;width:183px;height:1px;background:#dcdcdc"></div>
<div class="btn dis" style="top:355px"><svg style="left:24px;top:5px" width="16" height="16"><circle cx="7.5" cy="7.5" r="6.5" stroke="#c9d9ef" stroke-width="1.1" fill="none"/><rect x="5.5" y="5.5" width="4" height="4" fill="#c9d9ef"/></svg><div class="l" style="left:48px">Stop progress</div></div>
<div class="btn dis" style="top:395px"><svg style="left:40px;top:5px" width="16" height="16"><circle cx="7.5" cy="7.5" r="6.5" stroke="#c9d9ef" stroke-width="1.1" fill="none"/><path d="M6 5 L6 10 M9 5 L9 10" stroke="#c9d9ef" stroke-width="1.1"/></svg><div class="l" style="left:65px">Suspend</div></div>
<div class="btn dis" style="top:435px"><svg style="left:44px;top:4px" width="16" height="16"><path d="M5 2 L1.5 2 L1.5 14.5 L14 14.5 L14 11" stroke="#c9d9ef" stroke-width="1.1" fill="none"/><path d="M13.5 4.5 A3.3 3.3 0 1 0 13.8 7.5" stroke="#b8b8b8" stroke-width="1" fill="none"/><path d="M11.5 3.8 L13.6 4.5 L14 2.3" stroke="#b8b8b8" stroke-width="1" fill="none"/></svg><div class="l" style="left:69px">Reopen</div></div>
<div class="a" style="left:1725px;top:476px;width:183px;height:1px;background:#dcdcdc"></div>
<div class="btn" style="top:492px"><svg style="left:27px;top:3px" width="18" height="18"><path d="M3.4 7.3 L3.4 13.3 M1.3 11.4 L3.4 13.5 L5.5 11.4" stroke="#111" stroke-width="1.1" fill="none"/><path d="M5.1 4.4 L10.9 4.4 M5.1 6.5 L10.9 6.5 M5.1 8.6 L10.9 8.6" stroke="#3a62b0" stroke-width="0.9"/><path d="M12.5 6.8 L12.5 0.4 M10.4 2.3 L12.5 0.2 L14.6 2.3" stroke="#111" stroke-width="1.1" fill="none"/></svg><div class="l" style="left:52px">Change priority</div></div>
<div class="a" style="left:1725px;top:533px;width:183px;height:1px;background:#dcdcdc"></div>
<div class="btn" style="top:549px"><svg style="left:5px;top:2px" width="20" height="20"><path d="M1.2 0.3 L16.7 15.8 M16.7 0.3 L1.2 15.8" stroke="#d9546c" stroke-width="0.9"/></svg><div class="l" style="left:30px"><span style="letter-spacing:-0.2px">Open with Open Pla…</span></div></div>
</body></html>
